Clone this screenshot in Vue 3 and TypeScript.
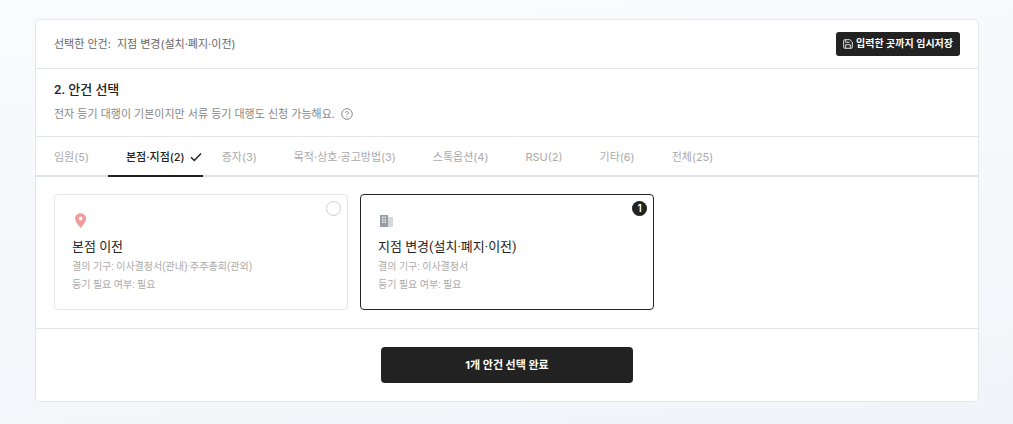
<script setup lang="ts">
import { computed, ref } from 'vue'

interface Tab {
  name: string
  count: number
}

interface Agenda {
  id: string
  icon: 'pin' | 'building'
  title: string
  organ: string
  registry: string
}

const tabs: Tab[] = [
  { name: '임원', count: 5 },
  { name: '본점·지점', count: 2 },
  { name: '증자', count: 3 },
  { name: '목적·상호·공고방법', count: 3 },
  { name: '스톡옵션', count: 4 },
  { name: 'RSU', count: 2 },
  { name: '기타', count: 6 },
  { name: '전체', count: 25 },
]

const agendas: Agenda[] = [
  {
    id: 'head-office',
    icon: 'pin',
    title: '본점 이전',
    organ: '이사결정서(관내)·주주총회(관외)',
    registry: '필요',
  },
  {
    id: 'branch',
    icon: 'building',
    title: '지점 변경(설치·폐지·이전)',
    organ: '이사결정서',
    registry: '필요',
  },
]

const activeTab = ref('본점·지점')
const selected = ref<string[]>(['branch'])

const selectedTitles = computed(() =>
  selected.value.map((id) => agendas.find((a) => a.id === id)?.title).join(', '),
)
</script>

<template>
  <main class="page">
    <section class="panel">
      <header class="topbar">
        <p class="summary">
          <span>선택한 안건:</span>
          <span>{{ selectedTitles }}</span>
        </p>
        <button class="save" type="button">
          <svg class="save-icon" viewBox="0 0 10 10" aria-hidden="true">
            <path d="M2 .7h4.9L9.3 3v5.2a1.1 1.1 0 0 1-1.1 1.1H1.8A1.1 1.1 0 0 1 .7 8.2V1.8A1.1 1.1 0 0 1 2 .7z" />
            <path d="M2.7.9v2.4h3.8M2.7 9.2V5.7h4.6v3.5" />
          </svg>
          입력한 곳까지 임시저장
        </button>
      </header>

      <div class="intro">
        <h1>2. 안건 선택</h1>
        <p class="desc">
          전자 등기 대행이 기본이지만 서류 등기 대행도 신청 가능해요.
          <button class="help" type="button" aria-label="도움말">
            <svg viewBox="0 0 12 12" aria-hidden="true">
              <circle cx="6" cy="6" r="5.3" />
              <path d="M4.5 4.9a1.5 1.4 0 1 1 2.3 1.2C6.2 6.4 6 6.6 6 7.1M6 8.2v.9" />
            </svg>
          </button>
        </p>
      </div>

      <nav class="tabs" role="tablist">
        <button
          v-for="tab in tabs"
          :key="tab.name"
          class="tab"
          :class="{ active: tab.name === activeTab }"
          type="button"
          role="tab"
          :aria-selected="tab.name === activeTab"
          @click="activeTab = tab.name"
        >
          {{ tab.name }}({{ tab.count }})
          <svg v-if="tab.name === activeTab" class="check" viewBox="0 0 12 10" aria-hidden="true">
            <path d="M1 5.2 4.3 8.5 11 1.4" />
          </svg>
        </button>
      </nav>

      <div class="options">
        <label
          v-for="item in agendas"
          :key="item.id"
          class="option"
          :class="{ chosen: selected.includes(item.id) }"
        >
          <input v-model="selected" class="pick" type="checkbox" :value="item.id" />
          <span v-if="selected.includes(item.id)" class="order">{{ selected.indexOf(item.id) + 1 }}</span>
          <svg v-if="item.icon === 'pin'" class="icon" viewBox="0 0 24 24" aria-hidden="true">
            <path
              fill="#f09d99"
              fill-rule="evenodd"
              d="M11.5 1.5C7.4 1.5 4.2 4.7 4.2 8.8 4.2 14.2 11.5 21.5 11.5 21.5s7.3-7.3 7.3-12.7C18.8 4.7 15.6 1.5 11.5 1.5zM11.5 6a2.5 2.5 0 1 1 0 5A2.5 2.5 0 0 1 11.5 6z"
            />
          </svg>
          <svg v-else class="icon" viewBox="0 0 18 18" aria-hidden="true">
            <path fill="#d5d8dd" d="M10 5h5v10h-5z" />
            <path fill="#989ca3" d="M2 3h8v12H2z" />
            <path
              fill="#eceef0"
              d="M4 4.5h1.5V6H4zM6.5 4.5H8V6H6.5zM4 7h1.5v1.5H4zM6.5 7H8v1.5H6.5zM4 9.5h1.5V11H4zM6.5 9.5H8V11H6.5z"
            />
          </svg>
          <span class="name">{{ item.title }}</span>
          <span class="meta">결의 기구: {{ item.organ }}</span>
          <span class="meta">등기 필요 여부: {{ item.registry }}</span>
        </label>
      </div>

      <footer class="actions">
        <button class="submit" type="button">{{ selected.length }}개 안건 선택 완료</button>
      </footer>
    </section>
  </main>
</template>

<style>
body {
  margin: 0;
}
</style>

<style scoped>
.page {
  box-sizing: border-box;
  min-height: 100vh;
  padding: 19px 34px 22px 35px;
  background: linear-gradient(175deg, #fafbfd, #f3f4f9);
  color: #222;
  font-family: Inter, 'Noto Sans CJK KR', sans-serif;
  font-size: 11px;
  line-height: 18px;
}

button {
  margin: 0;
  padding: 0;
  border: 0;
  background: none;
  color: inherit;
  font: inherit;
  cursor: pointer;
}

h1,
p {
  margin: 0;
}

.panel {
  border: 1px solid #e5e6ea;
  border-radius: 5px;
  background: #fff;
}

.topbar {
  display: flex;
  align-items: center;
  justify-content: space-between;
  padding: 12px 18px;
  border-bottom: 1px solid #e5e6e8;
}

.summary {
  display: flex;
  gap: 6px;
  color: #666;
}

.save {
  display: flex;
  align-items: center;
  gap: 3px;
  height: 24px;
  padding: 0 7px;
  border-radius: 3px;
  background: #222;
  color: #fff;
  font-family: Roboto, 'Noto Sans CJK KR', sans-serif;
  font-size: 10px;
  font-weight: 700;
}

.save-icon {
  width: 10px;
  height: 10px;
  fill: none;
  stroke: #ddd;
  stroke-width: 1;
}

.intro {
  padding: 11px 18px 13px;
  border-bottom: 1px solid #e5e6e8;
}

h1 {
  margin-bottom: 5px;
  font-family: Roboto, 'Noto Sans CJK KR', sans-serif;
  font-size: 13px;
  font-weight: 500;
  line-height: 20px;
}

.desc {
  display: flex;
  align-items: center;
  gap: 6px;
  color: #888;
}

.help,
.help svg {
  display: block;
  width: 12px;
  height: 12px;
}

.help svg {
  fill: none;
  stroke: #888;
  stroke-width: 1;
}

.tabs {
  display: flex;
  gap: 1px;
  border-bottom: 2px solid #e0e3e8;
}

.tab {
  position: relative;
  margin-bottom: -2px;
  padding: 11px 18px 9px;
  border-bottom: 2px solid transparent;
  color: #aaa;
  white-space: nowrap;
}

.tab.active {
  border-bottom-color: #222;
  color: #222;
  font-weight: 500;
}

.check {
  position: absolute;
  top: 15px;
  right: 1px;
  width: 12px;
  height: 10px;
  fill: none;
  stroke: #222;
  stroke-width: 1.5;
}

.options {
  display: grid;
  grid-template-columns: repeat(3, 1fr);
  gap: 12px;
  padding: 17px 18px 18px;
  border-bottom: 1px solid #e5e6e8;
}

.option {
  position: relative;
  display: flex;
  flex-direction: column;
  padding: 17px 17px 15px;
  border: 1px solid #e5e5e7;
  border-radius: 4px;
  cursor: pointer;
}

.option.chosen {
  border-color: #222;
}

.pick,
.order {
  position: absolute;
  top: 6px;
  right: 6px;
  box-sizing: border-box;
  width: 15px;
  height: 15px;
  border-radius: 50%;
}

.pick {
  margin: 0;
  border: 1px solid #c8cdd6;
  background: #fff;
  appearance: none;
  cursor: pointer;
}

.order {
  background: #222;
  color: #fff;
  font-size: 10px;
  font-weight: 600;
  line-height: 15px;
  text-align: center;
}

.icon {
  width: 18px;
  height: 18px;
  margin-bottom: 7px;
}

.name {
  margin-bottom: 1px;
  font-family: Roboto, 'Noto Sans CJK KR', sans-serif;
  font-size: 13px;
  line-height: 20px;
}

.meta {
  color: #aaa;
  font-family: Roboto, 'Noto Sans CJK KR', sans-serif;
  font-size: 10px;
}

.actions {
  display: flex;
  justify-content: center;
  padding: 18px;
}

.submit {
  width: 252px;
  height: 36px;
  border-radius: 4px;
  background: #222;
  color: #fff;
  font-weight: 700;
}
</style>
